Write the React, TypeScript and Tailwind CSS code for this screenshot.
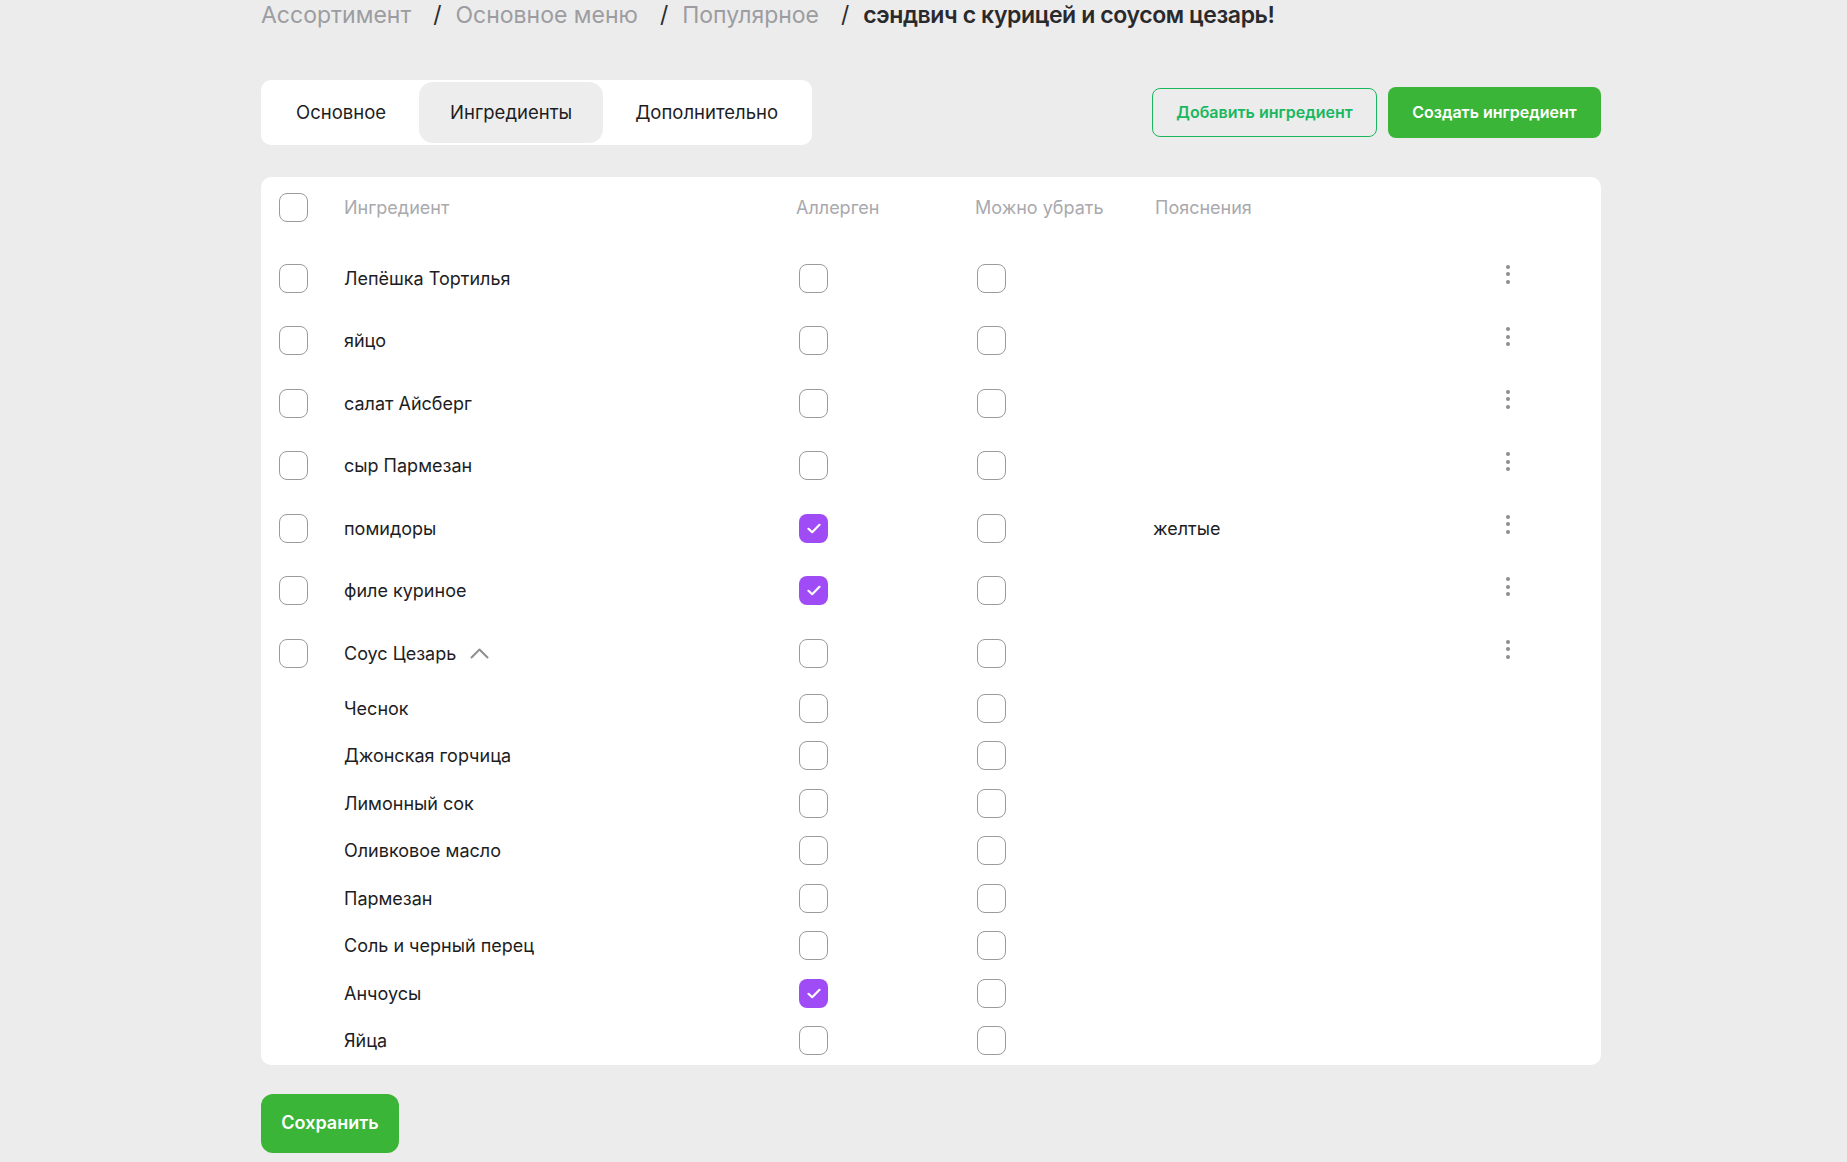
import React from "react"

type Item = {
  name: string
  allergen?: boolean
  removable?: boolean
  note?: string
  group?: boolean
}

const items: Item[] = [
  { name: "Лепёшка Тортилья" },
  { name: "яйцо" },
  { name: "салат Айсберг" },
  { name: "сыр Пармезан" },
  { name: "помидоры", allergen: true, note: "желтые" },
  { name: "филе куриное", allergen: true },
  { name: "Соус Цезарь", group: true },
]

const sauce: Item[] = [
  { name: "Чеснок" },
  { name: "Джонская горчица" },
  { name: "Лимонный сок" },
  { name: "Оливковое масло" },
  { name: "Пармезан" },
  { name: "Соль и черный перец" },
  { name: "Анчоусы", allergen: true },
  { name: "Яйца" },
]

function Box({ checked = false }: { checked?: boolean }) {
  if (checked) {
    return (
      <span className="flex h-[29px] w-[29px] items-center justify-center rounded-[8px] bg-[#a04cf6]">
        <svg width="14" height="11" viewBox="0 0 14 11" fill="none">
          <path d="M1.5 5.8 5.2 9.2 12.5 1.8" stroke="white" strokeWidth="2.2" strokeLinecap="round" strokeLinejoin="round" />
        </svg>
      </span>
    )
  }
  return <span className="block h-[29px] w-[29px] rounded-[8px] border border-[#9a9a9f] bg-white" />
}

function Kebab() {
  return (
    <span className="mb-[8px] flex flex-col items-center gap-[3.5px]">
      <span className="h-[4px] w-[4px] rounded-full bg-[#8d8d92]" />
      <span className="h-[4px] w-[4px] rounded-full bg-[#8d8d92]" />
      <span className="h-[4px] w-[4px] rounded-full bg-[#8d8d92]" />
    </span>
  )
}

const grid = "grid grid-cols-[65px_452px_179px_180px_1fr_36px] items-center pl-[18px] pr-[75px]"

export default function App() {
  return (
    <div className="min-h-screen bg-[#ececec] font-['Inter',sans-serif] text-[#1d1d1f]">
      <div className="ml-[261px] w-[1340px] pb-[20px]">
        <nav className="flex h-[30px] items-center text-[23px] leading-[30px]">
          <span className="text-[#9c9ca1]">Ассортимент</span>
          <span className="ml-[22px] mr-[14px] text-[#2a2a2c]">/</span>
          <span className="text-[#9c9ca1]">Основное меню</span>
          <span className="ml-[22px] mr-[14px] text-[#2a2a2c]">/</span>
          <span className="text-[#9c9ca1]">Популярное</span>
          <span className="ml-[22px] mr-[14px] text-[#2a2a2c]">/</span>
          <span className="font-semibold tracking-[-0.4px] text-[#2a2a2c]">сэндвич с курицей и соусом цезарь!</span>
        </nav>

        <div className="mt-[50px] flex items-center justify-between">
          <div className="flex h-[65px] items-stretch rounded-[10px] bg-white p-[2px] text-[18.5px]">
            <button className="rounded-[14px] px-[33px]">Основное</button>
            <button className="rounded-[14px] bg-[#ededed] px-[31px]">Ингредиенты</button>
            <button className="rounded-[14px] px-[32px]">Дополнительно</button>
          </div>
          <div className="flex items-center gap-[11px] text-[16px] font-semibold">
            <button className="h-[49px] w-[225px] rounded-[8px] border border-[#19b85f] bg-transparent pb-[2px] text-[#19b85f]">
              Добавить ингредиент
            </button>
            <button className="h-[51px] w-[213px] rounded-[8px] bg-[#3bb537] pb-[2px] text-white">
              Создать ингредиент
            </button>
          </div>
        </div>

        <div className="mt-[32px] rounded-[10px] bg-white">
          <div className={`${grid} h-[60px] text-[18px] text-[#a9a9ae]`}>
            <Box />
            <span>Ингредиент</span>
            <span>Аллерген</span>
            <span>Можно убрать</span>
            <span>Пояснения</span>
            <span />
          </div>

          <div className="mt-[10px]">
            {items.map((it) => (
              <div key={it.name} className={`${grid} h-[62.5px] text-[18px]`}>
                <Box />
                <span className="flex items-center gap-[14px]">
                  {it.name}
                  {it.group && (
                    <svg width="19" height="12" viewBox="0 0 19 12" fill="none">
                      <path d="M1.5 10.5 9.5 2.5 17.5 10.5" stroke="#8e8e93" strokeWidth="2" strokeLinecap="round" strokeLinejoin="round" />
                    </svg>
                  )}
                </span>
                <span className="ml-[3px]">
                  <Box checked={it.allergen} />
                </span>
                <span className="ml-[2px]">
                  <Box checked={it.removable} />
                </span>
                <span className="-ml-[2px]">{it.note}</span>
                <span className="flex justify-center">
                  <Kebab />
                </span>
              </div>
            ))}

            {sauce.map((it) => (
              <div key={it.name} className={`${grid} h-[47.5px] text-[18px]`}>
                <span />
                <span>{it.name}</span>
                <span className="ml-[3px]">
                  <Box checked={it.allergen} />
                </span>
                <span className="ml-[2px]">
                  <Box checked={it.removable} />
                </span>
                <span />
                <span />
              </div>
            ))}
          </div>
        </div>

        <button className="mt-[29px] h-[59px] w-[138px] rounded-[12px] bg-[#3bb537] pb-[2px] text-[18px] font-semibold text-white">
          Сохранить
        </button>
      </div>
    </div>
  )
}
